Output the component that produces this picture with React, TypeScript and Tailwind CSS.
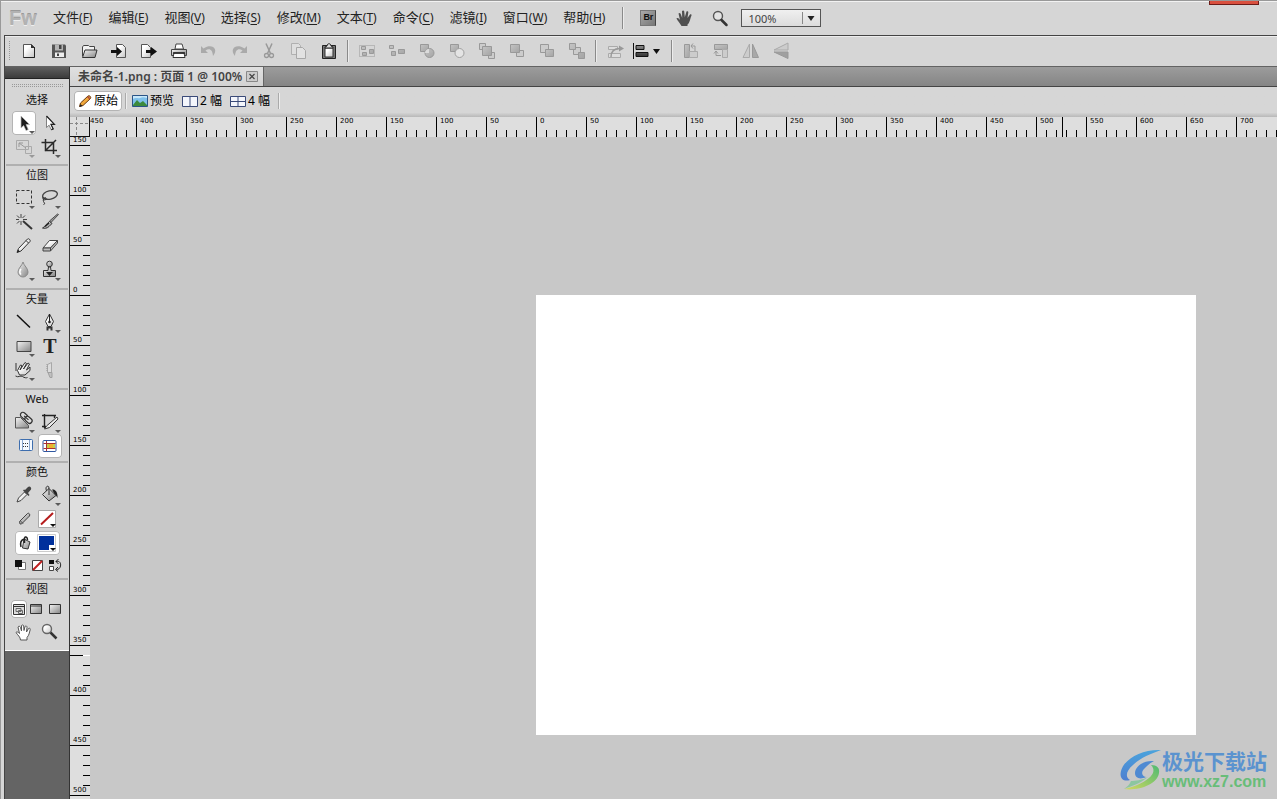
import React, { useEffect, useState } from 'react';
import clsx from 'clsx';

const MENUS = [
  ['文件', 'F'],
  ['编辑', 'E'],
  ['视图', 'V'],
  ['选择', 'S'],
  ['修改', 'M'],
  ['文本', 'T'],
  ['命令', 'C'],
  ['滤镜', 'I'],
  ['窗口', 'W'],
  ['帮助', 'H'],
];

/* how many 50px ruler segments fit in the window */
const countSegments = () => ({
  across: Math.ceil((window.innerWidth - 86) / 50),
  down: Math.floor((window.innerHeight - 145) / 50) + 1,
});

const useSegments = () => {
  const [segments, setSegments] = useState(countSegments);
  useEffect(() => {
    const onResize = () => setSegments(countSegments());
    window.addEventListener('resize', onResize);
    return () => window.removeEventListener('resize', onResize);
  }, []);
  return segments;
};

/* gradients shared by all the icons */
const Gradients = () => (
  <svg className="absolute h-0 w-0" aria-hidden="true">
    <defs>
      <linearGradient id="paper" x1="0" y1="0" x2="1" y2="1">
        <stop offset="0.3" stopColor="#fff" />
        <stop offset="1" stopColor="#c4c4c4" />
      </linearGradient>
      <linearGradient id="metal" x1="0" y1="0" x2="1" y2="1">
        <stop offset="0" stopColor="#f4f4f4" />
        <stop offset="1" stopColor="#858585" />
      </linearGradient>
      <linearGradient id="dark" x1="0" y1="0" x2="0" y2="1">
        <stop offset="0" stopColor="#8a8a8a" />
        <stop offset="1" stopColor="#333" />
      </linearGradient>
      <linearGradient id="dim" x1="0" y1="0" x2="1" y2="1">
        <stop offset="0" stopColor="#c4c4c4" />
        <stop offset="1" stopColor="#a4a4a4" />
      </linearGradient>
    </defs>
  </svg>
);

interface ToolButtonProps {
  label: string;
  active?: boolean;
  flyout?: boolean;
  dim?: boolean;
  children: React.ReactNode;
}

const ToolButton: React.FC<ToolButtonProps> = ({ label, active, flyout, dim, children }) => (
  <button
    type="button"
    aria-label={label}
    className={clsx('mx-px h-6 w-6', active && 'rounded-sm bg-white shadow-[inset_0_0_0_1px_#b4b4b4]')}
  >
    <svg viewBox="1 0 24 24" className="h-6 w-6 overflow-visible" fill="none">
      {children}
      {flyout && <path d="M18 20h6l-3 3z" fill={dim ? '#999' : '#5a5a5a'} />}
    </svg>
  </button>
);

const Section: React.FC<{ title: string; className?: string; first?: boolean; children: React.ReactNode }> = ({
  title,
  className,
  first,
  children,
}) => (
  <section className={className}>
    {!first && <div className="mx-px h-0.5 bg-[#b0b0b0]" />}
    <h2 className="flex h-[18px] items-center justify-center text-[11px] text-[#111]">{title}</h2>
    {children}
  </section>
);

const ToolGrid: React.FC<{ children: React.ReactNode }> = ({ children }) => (
  <div className="mt-0.5 grid grid-cols-[26px_26px] pl-1.5">{children}</div>
);

const ToolsPanel = () => (
  <aside className="flex w-[65px] flex-none flex-col border-r border-[#333] bg-[#646464]">
    <div className="h-3 flex-none border-b border-[#222] bg-linear-to-b from-[#606060] to-[#3c3c3c]" />
    <div className="flex-none border-b border-white bg-[#d6d6d6]">
      <div className="flex h-3 items-center px-1.5">
        <div className="h-[3px] flex-1 bg-[conic-gradient(#999_25%,transparent_0)] bg-size-[2px_2px]" />
      </div>

      <Section title="选择" className="pb-[5px]" first>
        <ToolGrid>
          <ToolButton label="指针" active flyout>
            <path d="M10 5v12l2.700-2.400 2.300 5 2.300-1-2.300-5h3.600z" fill="#1c1c1c" stroke="#bbb" strokeWidth="0.700" />
          </ToolButton>
          <ToolButton label="部分选定">
            <path d="M9.500 5v11.500l2.600-2.300 2.200 4.600 1.900-.9-2.200-4.500h3.400z" fill="#fff" stroke="#666" strokeWidth="0.800" />
            <path d="M9.500 5l7.900 8.400H14l2.200 4.500-1.900.9" stroke="#222" strokeWidth="1.200" />
          </ToolButton>
          <ToolButton label="缩放" flyout dim>
            <path d="M5.500 5.500h12v9h-12zM14.500 11.500h6v7h-6z" stroke="#aaa" />
            <path d="M8 8l7 5M8 12V8h4" stroke="#999" />
          </ToolButton>
          <ToolButton label="裁剪" flyout>
            <path d="M8.500 4v11.500H20M4.500 7.500h12V19M8 16L19 5" stroke="#2a2a2a" strokeWidth="1.500" />
          </ToolButton>
        </ToolGrid>
      </Section>

      <Section title="位图" className="pb-1.5">
        <ToolGrid>
          <ToolButton label="选取框" flyout>
            <path d="M5.500 4.500h15v13h-15z" stroke="#333" strokeDasharray="3 2" />
          </ToolButton>
          <ToolButton label="套索" flyout>
            <ellipse cx="13" cy="9" rx="7.500" ry="4.200" stroke="#444" strokeWidth="1.400" transform="rotate(-12 13 9)" />
            <path d="M6 11c-1 3 3 4 3 1.500S5 13 6.500 15.500 8 18 6.500 18.500" stroke="#333" />
          </ToolButton>
          <ToolButton label="魔术棒">
            <path d="M12 11l9 8" stroke="#333" strokeWidth="2" />
            <path d="M10 4v4M10 11v4M5 9.500h3M12 9.500h4M6 5.500l2.500 2.500M14 5.500L11.500 8M6 13.500L8.500 11" stroke="#444" />
          </ToolButton>
          <ToolButton label="刷子">
            <path d="M21.500 4.500l-7.500 8-1.500-1.500L20.500 4z" fill="#999" stroke="#333" strokeWidth="0.800" />
            <path d="M12.500 11.500l2.500 2-3 3c-2 2-4.500 2-6.500 1.500 2.500-1 4-4.500 7-6.500z" fill="url(#metal)" stroke="#333" />
            <path d="M8 16.500l4-3.500" stroke="#222" strokeWidth="1.500" />
          </ToolButton>
          <ToolButton label="铅笔">
            <path d="M6 18.500l1.500-4L16.500 5c1-1 3.500 1 2.500 2.500L10 17z" fill="url(#paper)" stroke="#333" />
            <path d="M6 18.500l1-3 2 2z" fill="#222" />
            <path d="M15 6.500l2.500 2.500" stroke="#333" />
          </ToolButton>
          <ToolButton label="橡皮擦">
            <path d="M12.500 6.500h8l-7 7.500H6z" fill="url(#paper)" stroke="#444" />
            <path d="M6 14v3h7.500l7-8V6.500L13.500 14z" fill="#bbb" stroke="#444" />
            <path d="M13.500 14v3" stroke="#444" />
          </ToolButton>
          <ToolButton label="模糊" flyout>
            <path d="M12 4c1 4 5 6 5 10a5 5 0 0 1-10 0c0-4 4-6 5-10z" fill="url(#metal)" stroke="#8a8a8a" />
            <path d="M10 11c-1.500 2-1.500 4 0 5.500" stroke="#fff" strokeWidth="1.500" />
          </ToolButton>
          <ToolButton label="橡皮图章" flyout>
            <circle cx="12.500" cy="6" r="2.800" fill="url(#metal)" stroke="#333" />
            <path d="M11.500 9h2l.5 3.500h4.500v6h-12v-6H11z" fill="url(#metal)" stroke="#333" />
            <path d="M9 14h7l-3.500 4z" fill="#222" />
          </ToolButton>
        </ToolGrid>
      </Section>

      <Section title="矢量" className="pb-1.5">
        <ToolGrid>
          <ToolButton label="直线">
            <path d="M6 5l13 12.500" stroke="#111" strokeWidth="1.500" />
          </ToolButton>
          <ToolButton label="钢笔" flyout>
            <path d="M12.500 4l-4 7.500 2.500 5h3l2.500-5z" fill="url(#paper)" stroke="#333" />
            <path d="M12.500 4v8" stroke="#222" />
            <circle cx="12.500" cy="12" r="1.300" fill="#222" />
            <path d="M9.500 16.500h6v4h-2v-2h-2v2h-2z" fill="#333" />
          </ToolButton>
          <ToolButton label="矩形" flyout>
            <path d="M6 7.500h14v10H6z" fill="url(#metal)" stroke="#444" />
          </ToolButton>
          <ToolButton label="文本">
            <text x="13" y="19" textAnchor="middle" fontFamily="Liberation Serif, serif" fontWeight="700" fontSize="20" fill="#222">
              T
            </text>
          </ToolButton>
          <ToolButton label="自由变形" flyout>
            <path d="M8.500 17l-2-4.500 3-5.500 1.500.5L9 12l5-7.500 1.500 1L12.500 11l4.500-6 1.500 1-3 6 3.500-3v3.500L14 17z" fill="url(#paper)" stroke="#333" />
            <path d="M5 5v8M4.500 18c3 2 5-1 7 .5s4 1.500 5 1" stroke="#333" />
          </ToolButton>
          <ToolButton label="刀子">
            <path d="M14.500 4.500v10h-4v-8z" fill="#dcdcdc" stroke="#a8a8a8" />
            <path d="M10 6v8" stroke="#999" strokeDasharray="1 1" />
            <path d="M11 14.500h4v5h-2z" fill="#c0c0c0" stroke="#a0a0a0" />
          </ToolButton>
        </ToolGrid>
      </Section>

      <Section title="Web" className="pb-[3px]">
        <ToolGrid>
          <ToolButton label="热点" flyout>
            <path d="M4.500 7.500h5l8 8v2.500h-13z" fill="url(#metal)" stroke="#555" />
            <g stroke="#333" fill="#ddd" strokeWidth="1.200" transform="rotate(42 16 8.500)">
              <rect x="8" y="6" width="8" height="5" rx="2.500" />
              <rect x="14" y="6" width="8" height="5" rx="2.500" />
              <path d="M12 8.500h6" />
            </g>
          </ToolButton>
          <ToolButton label="切片" flyout>
            <path d="M5 5.500h14M7.500 4v14M5 16.500h4M17.500 5v3" stroke="#222" strokeWidth="1.400" />
            <path d="M20 7l1 2-8.500 8.500-5 1.500 2-3z" fill="url(#paper)" stroke="#333" />
          </ToolButton>
          <ToolButton label="隐藏切片">
            <rect x="8.500" y="5.500" width="13" height="11" rx="1" fill="#f4f9ff" stroke="#3e6eae" />
            <path d="M11.500 6v10M18.500 6v10" stroke="#8aa8d0" />
            <path d="M12 9.500h6M12 12.500h6" stroke="#333" strokeDasharray="1 1" />
          </ToolButton>
          <ToolButton label="显示切片" active>
            <rect x="6" y="6.500" width="13" height="11" rx="1" fill="#fff" stroke="#2f57a0" />
            <path d="M9.500 7v10M6.500 9.500H10M6.500 14.500H10M10 9.500h8.500M10 14.500h8.500" stroke="#a33" />
            <path d="M10 10h8v4h-8z" fill="#c4d048" />
            <path d="M12 10h4v4h-4z" fill="#f0b030" />
          </ToolButton>
        </ToolGrid>
      </Section>

      <Section title="颜色" className="pb-[3px]">
        <ToolGrid>
          <ToolButton label="滴管">
            <path d="M6 19l1.500-4 6-6 2.500 2.500-6 6z" fill="url(#paper)" stroke="#444" />
            <path d="M12 7.500l5.500 5.500 1-1-1.500-2 3-3.500c1-2-1.500-4-3-2.500l-3 3-1-.5z" fill="#444" />
          </ToolButton>
          <ToolButton label="油漆桶" flyout>
            <path d="M12 5.500l7 7-7 5.500-6.500-6.500z" fill="url(#metal)" stroke="#333" />
            <path d="M12 12V5c0-3-3.500-2-3 1l.5 2" stroke="#333" />
            <path d="M15 6.500c3-.5 6 2 5.500 8.500-1-2-1.500-3-3-4z" fill="#222" />
          </ToolButton>
          <ToolButton label="笔触">
            <path d="M9 17l-.5-2.500 8-8c1-1 3 .5 2 2.500l-8 8z" fill="url(#metal)" stroke="#444" />
            <path d="M9.500 14l2.500 2.500" stroke="#444" />
          </ToolButton>
          <ToolButton label="笔触颜色">
            <path d="M1.500 3.500h17v17h-17z" fill="#fff" stroke="#aaa" />
            <path d="M4 17.500L16 6" stroke="#b51c1c" strokeWidth="2" />
            <path d="M13 17h6l-3 3z" fill="#111" />
          </ToolButton>
        </ToolGrid>
        <div className="ml-2.5 grid w-[45px] grid-cols-[22px_23px] rounded-sm bg-white shadow-[inset_0_0_0_1px_#bbb]">
          <button type="button" aria-label="填充" className="h-6">
            <svg viewBox="0 0 22 24" className="h-6 w-[22px]" fill="none">
              <path d="M9 8l6 3-2 7-5.500-1z" fill="url(#metal)" stroke="#333" />
              <path d="M9 8c-3 1-4 4-3 8M9.500 12V7c1-2 3-1 3 2" stroke="#222" strokeWidth="1.500" />
            </svg>
          </button>
          <button type="button" aria-label="填充颜色" className="h-6">
            <svg viewBox="0 0 23 24" className="h-6 w-[23px]" fill="none">
              <path d="M.5 3.500h18v17H.5z" fill="#fff" stroke="#ccc" />
              <path d="M2 5h15v9h-5v5H2z" fill="#00309c" />
              <path d="M13 17h6l-3 3z" fill="#111" />
            </svg>
          </button>
        </div>
        <div className="flex h-5 items-center gap-1 pl-2.5">
          <button type="button" aria-label="默认颜色">
            <svg viewBox="0 0 13 13" className="h-[13px] w-[13px]">
              <path d="M3.500 3.500h7v7h-7z" fill="#fff" stroke="#777" />
              <path d="M0 1h7v7H0z" fill="#111" />
            </svg>
          </button>
          <button type="button" aria-label="无颜色">
            <svg viewBox="0 0 13 13" className="h-[13px] w-[13px]">
              <path d="M.5 1.500h10v10H.5z" fill="#fff" stroke="#444" />
              <path d="M1 11l9-9" stroke="#c02020" strokeWidth="2" />
            </svg>
          </button>
          <button type="button" aria-label="交换颜色">
            <svg viewBox="0 0 13 13" className="h-[13px] w-[13px]" fill="none">
              <path d="M0 1h5v4H0z" fill="#111" />
              <path d="M.5 7.500h4v4h-4z" fill="#fff" stroke="#444" />
              <path d="M7 2.500c4-1 5 2 4.500 4.500s-2 3.500-4 3.500M9.500 0L7 2.500 9.500 5M9 8l-2.500 2.500L9 12.500" stroke="#222" />
            </svg>
          </button>
        </div>
      </Section>

      <Section title="视图" className="pb-1.5">
        <div className="flex h-[22px] items-center gap-[3px] pl-1.5">
          <button type="button" aria-label="标准屏幕模式" className="rounded-sm bg-white px-0.5 py-[3px] shadow-[inset_0_0_0_1px_#b0b0b0]">
            <svg viewBox="0 0 12 12" className="h-3 w-3" fill="none">
              <path d="M.5 1.500h11v10H.5z" fill="#ddd" stroke="#333" />
              <path d="M1 3.500h10" stroke="#333" />
              <path d="M3 5.500h5v3H3zM5.500 7.500h4v3h-4z" stroke="#666" />
            </svg>
          </button>
          <button type="button" aria-label="带有菜单的全屏模式">
            <svg viewBox="0 0 12 12" className="h-3 w-3">
              <path d="M.5 1.500h11v9H.5z" fill="url(#metal)" stroke="#333" />
              <path d="M1 3h10" stroke="#333" />
            </svg>
          </button>
          <button type="button" aria-label="全屏模式" className="ml-1">
            <svg viewBox="0 0 12 12" className="h-3 w-3">
              <path d="M.5 1.500h11v9H.5z" fill="url(#metal)" stroke="#333" />
            </svg>
          </button>
        </div>
        <div className="flex pl-1.5">
          <ToolButton label="手形">
            <path d="M9.500 20c0-3-3-5-4.500-7.500 1-1.500 2.500 0 3.500 1L7 7c1-1.500 2-.5 2.500.5l1 3.500V5.500c1-1 2-.5 2.200.5l.3 4.500 1-4c1-1 2.200-.3 2 1L15.500 12l2-3.500c1-.8 2 0 1.700 1.200-1 3.300-1 5.300-3.200 7.800V20z" fill="#fff" stroke="#555" />
          </ToolButton>
          <ToolButton label="缩放工具">
            <circle cx="10" cy="9" r="4.500" fill="url(#paper)" stroke="#666" strokeWidth="1.400" />
            <path d="M13.500 12.500l6 6" stroke="#333" strokeWidth="2.500" />
          </ToolButton>
        </div>
      </Section>
    </div>
  </aside>
);

const BarButton: React.FC<{ label: string; children: React.ReactNode }> = ({ label, children }) => (
  <button type="button" aria-label={label} className="flex h-6 w-[30px] flex-none items-center justify-center">
    <svg viewBox="0 0 20 20" className="h-5 w-5" fill="none">
      {children}
    </svg>
  </button>
);

const Divider = () => (
  <div className="flex w-2 flex-none justify-center">
    <div className="h-[22px] w-0.5 border-l border-[#8a8a8a] bg-[#ececec]" />
  </div>
);

const MainToolbar = () => (
  <div className="flex h-[31px] flex-none items-center border-b border-[#636363] bg-[#d6d6d6] shadow-[inset_0_1px_0_#ededed]">
    <div className="flex w-[9px] flex-none justify-center">
      <div className="h-5 w-[3px] bg-[conic-gradient(#999_25%,transparent_0)] bg-size-[2px_2px]" />
    </div>
    <BarButton label="新建">
      <path d="M4.500 3.500h8l3 3v10h-11z" fill="url(#paper)" stroke="#555" />
      <path d="M15.500 6v10.500h-11" stroke="#222" />
      <path d="M12 3v4h4z" fill="#333" />
    </BarButton>
    <BarButton label="保存">
      <path d="M3 3.500h13l1 1V17H3z" fill="#555" />
      <path d="M6 3.500h8v6H6z" fill="#b4b4b4" />
      <path d="M6 11.500h9V16H6z" fill="#eee" />
      <path d="M8 12.500h2v2.500H8zM10 4h2.500v4H10z" fill="#444" />
    </BarButton>
    <BarButton label="打开">
      <path d="M3.500 15V6l1-1.500h5l1 1h5V9" fill="#f2f2f2" stroke="#444" />
      <path d="M3.500 16.500L6 9h12l-2 7.500z" fill="url(#metal)" stroke="#333" />
    </BarButton>
    <BarButton label="导入">
      <path d="M7.500 3.500h6l3 3v10h-9z" fill="url(#paper)" stroke="#555" />
      <path d="M2 9h6V6l5 4.500L8 15v-3H2z" fill="#111" />
    </BarButton>
    <BarButton label="导出">
      <path d="M2.500 3.500h6l3 3v10h-9z" fill="url(#paper)" stroke="#555" />
      <path d="M7 9h5V6l6 4.500-6 4.500v-3H7z" fill="#111" />
    </BarButton>
    <BarButton label="打印">
      <path d="M6 8l1-5h6l1.500 5z" fill="#fff" stroke="#444" />
      <path d="M2.500 8.500h15v6h-15z" fill="url(#metal)" stroke="#444" />
      <path d="M5 12h10l1 4.500H4z" fill="#fff" stroke="#333" />
      <path d="M4 12h12" stroke="#222" strokeWidth="1.500" />
    </BarButton>
    <BarButton label="撤消">
      <path d="M2 5v7h7l-2.500-2.500c4-2.500 7-1 7.500 5.500 6-7-1-13-9.500-7.500z" fill="#aaa" />
    </BarButton>
    <BarButton label="重做">
      <path d="M18 5v7h-7l2.500-2.500c-4-2.500-7-1-7.500 5.500-6-7 1-13 9.500-7.500z" fill="#aaa" />
    </BarButton>
    <BarButton label="剪切">
      <path d="M7 2.500l4.500 10M13 2.500L8.500 12.500" stroke="#999" strokeWidth="1.500" />
      <circle cx="7.500" cy="14.500" r="2" stroke="#999" strokeWidth="1.300" />
      <circle cx="12.500" cy="14.500" r="2" stroke="#999" strokeWidth="1.300" />
    </BarButton>
    <BarButton label="复制">
      <path d="M2.500 2.500h7l2 2v9h-9z" fill="#dedede" stroke="#b0b0b0" />
      <path d="M7.500 6.500h6l3 3v8h-9z" fill="#e2e2e2" stroke="#a8a8a8" />
    </BarButton>
    <BarButton label="粘贴">
      <path d="M3.500 4.500h13v13h-13z" fill="#777" stroke="#222" />
      <path d="M6 7h8v9H6z" fill="url(#paper)" stroke="#333" />
      <path d="M6 6l2-1c0-3 4-3 4 0l2 1v1H6z" fill="#ddd" stroke="#222" />
    </BarButton>
    <Divider />
    <BarButton label="组合">
      <path d="M2.500 4.500h15v11h-15z" stroke="#999" strokeDasharray="1 1" />
      <path d="M4.500 5.500h4v3h-4zM5.500 11.500h4v3h-4zM12.500 8.500h4v4h-4z" fill="url(#dim)" stroke="#999" />
    </BarButton>
    <BarButton label="取消组合">
      <path d="M2.500 4.500h4v3h-4zM4.500 10.500h4v4h-4zM11.500 8.500h6v4h-6z" fill="url(#dim)" stroke="#999" />
    </BarButton>
    <BarButton label="联合">
      <path d="M3.500 3.500h8v7h-8z" fill="url(#dim)" stroke="#999" />
      <circle cx="12.500" cy="12" r="4.500" fill="url(#dim)" stroke="#999" />
      <path d="M8 12c0-2 1.500-4 4-4v4z" fill="#dcdcdc" />
    </BarButton>
    <BarButton label="打孔">
      <path d="M3.500 3.500h8v7h-8z" fill="url(#dim)" stroke="#999" />
      <circle cx="12.500" cy="12" r="4.500" fill="#e4e4e4" stroke="#a0a0a0" />
    </BarButton>
    <BarButton label="移到最前">
      <path d="M2.500 2.500h6v6h-6zM11.500 11.500h6v6h-6z" fill="#ccc" stroke="#999" />
      <path d="M5.500 5.500h9v9h-9z" fill="url(#dim)" stroke="#999" />
    </BarButton>
    <BarButton label="前移">
      <path d="M9.500 9.500h7v6h-7z" fill="#ccc" stroke="#999" />
      <path d="M3.500 3.500h9v8h-9z" fill="url(#dim)" stroke="#999" />
    </BarButton>
    <BarButton label="后移">
      <path d="M3.500 3.500h8v8h-8z" fill="#ccc" stroke="#999" />
      <path d="M8.500 8.500h8v7h-8z" fill="url(#dim)" stroke="#999" />
    </BarButton>
    <BarButton label="移到最后">
      <path d="M6.500 6.500h7v7h-7z" fill="#ccc" stroke="#999" />
      <path d="M2.500 2.500h6v6h-6zM11.500 11.500h6v6h-6z" fill="url(#dim)" stroke="#999" />
    </BarButton>
    <Divider />
    <BarButton label="分散排列">
      <path d="M3.500 5.500h9v3h-9zM3.500 12.500h12v4h-12z" fill="#ddd" stroke="#aaa" />
      <path d="M6 16c0-6 3-8.500 9-8.500" stroke="#999" strokeWidth="1.500" />
      <path d="M14 4.500l5 3-5 3z" fill="#999" />
    </BarButton>
    <button type="button" aria-label="对齐" className="flex h-6 w-[38px] flex-none items-center pl-0.5">
      <svg viewBox="0 0 30 20" className="h-5 w-[30px]" fill="none">
        <path d="M1.500 2v16" stroke="#111" />
        <path d="M4 4.500h8v4H4zM4 11.500h12v4H4z" fill="url(#dark)" stroke="#111" />
        <path d="M21 8h7l-3.500 5z" fill="#111" />
      </svg>
    </button>
    <Divider />
    <BarButton label="逆时针旋转">
      <path d="M3.500 3.500h5v13h-5z" fill="url(#dim)" stroke="#999" />
      <path d="M8.500 10.500h8v6h-8z" fill="#ccc" stroke="#aaa" />
      <path d="M10 5h4v5M12 2.500L10 5l2 2.500" stroke="#999" />
    </BarButton>
    <BarButton label="顺时针旋转">
      <path d="M3.500 3.500h13v5h-13z" fill="url(#dim)" stroke="#999" />
      <path d="M11.500 8.500h5v8h-5z" fill="#ccc" stroke="#aaa" />
      <path d="M5 10v4.500h5M3 12.500l2-2.500 2 2.500" stroke="#999" />
    </BarButton>
    <BarButton label="水平翻转">
      <path d="M8.500 3v13.500H2z" fill="#ccc" stroke="#aaa" />
      <path d="M11.500 3v13.500h6z" fill="#a8a8a8" stroke="#999" />
    </BarButton>
    <BarButton label="垂直翻转">
      <path d="M17 2v7H3z" fill="#ccc" stroke="#aaa" />
      <path d="M17 11v6.500L3 11z" fill="#a0a0a0" stroke="#999" />
    </BarButton>
  </div>
);

const MenuBar = () => (
  <header className="flex h-[34px] flex-none items-center pl-2 shadow-[inset_0_1px_0_#f2f2f2]">
    <div className="w-9 flex-none font-['Liberation_Sans',sans-serif] text-[20px] font-bold text-[#b2b2b2] [text-shadow:0_1px_0_#eee,0_-1px_0_#999]">
      Fw
    </div>
    <nav className="flex flex-none">
      {MENUS.map(([name, key]) => (
        <button key={name} type="button" className="px-2 text-[13px] whitespace-nowrap text-[#222]">
          {name}
          <span className="text-xs">
            (<u className="underline-offset-2">{key}</u>)
          </span>
        </button>
      ))}
    </nav>
    <div className="ml-1.5 flex flex-none">
      <Divider />
    </div>
    <div className="ml-1.5 flex flex-none items-center gap-1.5">
      <button type="button" aria-label="Bridge" className="flex h-6 w-[30px] items-center justify-center">
        <span className="flex h-4 w-4 items-center justify-center border border-[#777] border-r-[#444] bg-linear-to-br from-[#aaa] to-[#777] font-['Liberation_Sans',sans-serif] text-[9px] font-bold text-[#111]">
          Br
        </span>
      </button>
      <BarButton label="手形工具">
        <path d="M7.500 18C6 15 3.500 13 2.500 10.500c1-1 2.500 0 3.500 1.500L4.500 5.500c.8-1 1.800-.7 2.200.5l1.500 4L8 3c.8-.9 2-.7 2.200.3l.6 6L12.500 3.500c.8-.7 1.900-.2 1.800.9L13.500 10l2.500-3.500c.9-.5 1.700 0 1.500 1-1.500 3-1.500 7-4 9V18z" fill="#505050" />
      </BarButton>
      <BarButton label="放大镜">
        <circle cx="8" cy="8" r="4.500" fill="#e4e4e4" stroke="#555" strokeWidth="1.400" />
        <path d="M11.500 12l5 5" stroke="#333" strokeWidth="2.500" strokeLinecap="round" />
      </BarButton>
    </div>
    <div className="relative ml-1.5 flex-none">
      <select
        aria-label="缩放比例"
        defaultValue="100"
        className="block h-[18px] w-20 appearance-none border border-[#555] bg-linear-to-b from-[#f0f0f0] to-[#dcdcdc] pl-1.5 text-[11px] leading-none text-[#444]"
      >
        <option value="50">50%</option>
        <option value="100">100%</option>
        <option value="200">200%</option>
      </select>
      <svg viewBox="0 0 18 16" className="pointer-events-none absolute top-px right-px h-4 w-[18px]">
        <path d="M.5 2v12" stroke="#888" />
        <path d="M5.500 6h7L9 11z" fill="#222" />
      </svg>
    </div>
  </header>
);

const DocumentTabs = () => (
  <div className="flex h-5 flex-none border-b border-[#444] bg-linear-to-b from-[#9c9c9c] to-[#858585]">
    <div className="flex items-center gap-1 border-r border-[#666] bg-linear-to-b from-[#e0e0e0] to-[#d2d2d2] pr-1 pl-2">
      <span className="text-xs leading-none font-semibold whitespace-nowrap text-[#444]">未命名-1.png : 页面 1 @ 100%</span>
      <button type="button" aria-label="关闭" className="h-[13px] w-[13px]">
        <svg viewBox="0 0 13 13" className="h-[13px] w-[13px]" fill="none">
          <path d="M.5 1.500h11v10H.5z" fill="#ccc" stroke="#888" />
          <path d="M3.500 4l5 5M8.500 4l-5 5" stroke="#444" strokeWidth="1.200" />
        </svg>
      </button>
    </div>
  </div>
);

const ViewBar = () => (
  <div className="flex h-[30px] flex-none items-center bg-linear-to-b from-[#d6d6d6] from-85% to-[#b8b8b8] pb-0.5 pl-1 text-xs text-black">
    <button type="button" className="flex h-5 items-center gap-0.5 rounded-sm bg-white px-1 whitespace-nowrap shadow-[inset_0_0_0_1px_#b4b4b4]">
      <svg viewBox="0 0 14 14" className="h-3.5 w-3.5" fill="none">
        <path d="M1.500 12.500l1-3.500L10 2c1.500-1 3.500 1 2.500 2.500L5 11.500z" fill="#f2a93b" stroke="#6a3a10" />
        <path d="M1.500 13l1-3 2 2z" fill="#222" />
        <path d="M9.500 2.500L12 5" stroke="#b04a3a" strokeWidth="1.500" />
      </svg>
      原始
    </button>
    <div className="ml-[3px] h-4 w-0.5 flex-none border-l border-[#aaa] bg-[#eee]" />
    <button type="button" className="ml-[5px] flex items-center gap-0.5 whitespace-nowrap">
      <svg viewBox="0 0 16 14" className="h-3.5 w-4">
        <path d="M.5 1.500h15v11H.5z" fill="#7fc0ea" stroke="#2a5487" />
        <path d="M1 11l4-5 3 3 3-2 4 4v1H1z" fill="#3c8a3c" />
        <path d="M1 5c3-2 5 0 7-1s4-1 7 0V2H1z" fill="#c8e8fa" />
      </svg>
      预览
    </button>
    <button type="button" className="ml-2 flex items-center gap-0.5 whitespace-nowrap">
      <svg viewBox="0 0 16 14" className="h-3.5 w-4" stroke="#3a4a78">
        <path d="M.5 2.500h15v10H.5z" fill="#f4f6fc" />
        <path d="M8 2.500v10M.5 2.500h15" />
      </svg>
      2 幅
    </button>
    <button type="button" className="ml-2 flex items-center gap-0.5 whitespace-nowrap">
      <svg viewBox="0 0 16 14" className="h-3.5 w-4" stroke="#3a4a78">
        <path d="M.5 2.500h15v10H.5z" fill="#f4f6fc" />
        <path d="M8 2.500v10M.5 7.500h15" />
      </svg>
      4 幅
    </button>
    <div className="ml-2 h-4 w-0.5 flex-none border-l border-[#aaa] bg-[#eee]" />
  </div>
);

const HorizontalRuler: React.FC<{ count: number }> = ({ count }) => (
  <div className="flex h-5 flex-none bg-[#dedede]">
    <svg viewBox="0 0 20 20" className="h-5 w-5 flex-none" fill="none">
      <path d="M0 6.500h20M6.500 0v20" stroke="#888" strokeDasharray="3 2" />
      <path d="M19.500 0v20M0 19.500h20" stroke="#111" />
    </svg>
    <div className="relative min-w-0 flex-1 overflow-hidden">
      <div className="-ml-1 flex">
        {Array.from({ length: count }, (_, i) => (
          <div key={i} className="flex h-5 w-[50px] flex-none flex-col justify-between border-l border-black">
            <span className="pl-[3px] font-['DejaVu_Sans',sans-serif] text-[7px] leading-[9px] text-black">
              {Math.abs(450 - 50 * i)}
            </span>
            <div className="flex">
              {[1, 2, 3, 4].map((t) => (
                <i key={t} className="h-[7px] w-2.5 border-r border-black" />
              ))}
            </div>
          </div>
        ))}
      </div>
      {/* pointer position */}
      <i className="absolute top-0 left-[972px] h-5 w-px bg-black" />
    </div>
  </div>
);

const VerticalRuler: React.FC<{ count: number }> = ({ count }) => (
  <div className="relative w-5 flex-none overflow-hidden bg-[#dedede]">
    <div className="-mt-[41px]">
      {Array.from({ length: count }, (_, i) => (
        <div key={i} className="flex h-[50px] justify-between border-b border-black">
          <span className="self-end pl-[3px] font-['DejaVu_Sans',sans-serif] text-[7px] leading-[9px] text-black">
            {Math.abs(150 - 50 * i)}
          </span>
          <div className="-ml-2 w-[7px] flex-none">
            {[1, 2, 3, 4].map((t) => (
              <i key={t} className="block h-2.5 border-b border-black" />
            ))}
          </div>
        </div>
      ))}
    </div>
    <i className="absolute top-[518px] left-0 h-px w-5 border-r-[7px] border-white bg-black" />
  </div>
);

const Watermark = () => (
  <div className="absolute right-2.5 bottom-2 flex items-center">
    <svg viewBox="0 0 42 42" className="h-[42px] w-[42px]">
      <defs>
        <linearGradient id="swoosh" x1="0" y1="0" x2="0" y2="1">
          <stop offset="0" stopColor="#4aa3dc" />
          <stop offset="1" stopColor="#4f7fd0" />
        </linearGradient>
        <linearGradient id="leaf" x1="0" y1="1" x2="1" y2="0">
          <stop offset="0" stopColor="#d3d860" />
          <stop offset="1" stopColor="#4dba72" />
        </linearGradient>
      </defs>
      <path d="M41 1C22 0 4 10 1 22c-2 8 3 11 9 9-5-3-4-9 3-15C20 9 30 5 41 1z" fill="url(#swoosh)" />
      <path d="M34 12c-11-1-19 6-19 12 0 5 5 7 11 4-5-1-5-6-1-9 3-3 5-5 9-7z" fill="#4f8ad2" />
      <path d="M4 40c14 2 33-4 35-16 1-5-2-8-8-8 4 4 3 9-2 13-7 6-16 9-25 11z" fill="url(#leaf)" />
      <path d="M4 40c8-3 17-6 24-12-6 3-13 4-17 4-1 3-4 6-7 8z" fill="#8cc6a0" />
    </svg>
    <div className="flex flex-col">
      <span className="text-[21px] leading-6 font-bold text-[#5b93cf]">极光下载站</span>
      <span className="font-['Liberation_Sans',sans-serif] text-base leading-[18px] font-bold text-[#68bd78]">www.xz7.com</span>
    </div>
  </div>
);

const App = () => {
  const { across, down } = useSegments();

  return (
    <div className="relative flex h-screen flex-col overflow-hidden border-t border-l border-[#999] bg-[#d6d6d6] font-['Noto_Sans','Noto_Sans_CJK_SC',sans-serif]">
      <Gradients />
      <div className="absolute -top-px right-[18px] h-[5px] w-[50px] border border-t-0 border-[#6e1c18] bg-[#d9503f]" />
      <MenuBar />
      <div className="ml-[3px] flex min-h-0 flex-1 flex-col border-t border-l border-[#444]">
        <MainToolbar />
        <div className="flex min-h-0 flex-1">
          <ToolsPanel />
          <main className="flex min-w-0 flex-1 flex-col">
            <DocumentTabs />
            <ViewBar />
            <HorizontalRuler count={across} />
            <div className="flex min-h-0 flex-1">
              <VerticalRuler count={down} />
              <div className="relative min-w-0 flex-1 overflow-hidden bg-[#c8c8c8] pt-[158px] pl-[446px]">
                <div className="h-[440px] w-[660px] bg-white" />
                <Watermark />
              </div>
            </div>
          </main>
        </div>
      </div>
    </div>
  );
};

export default App;
